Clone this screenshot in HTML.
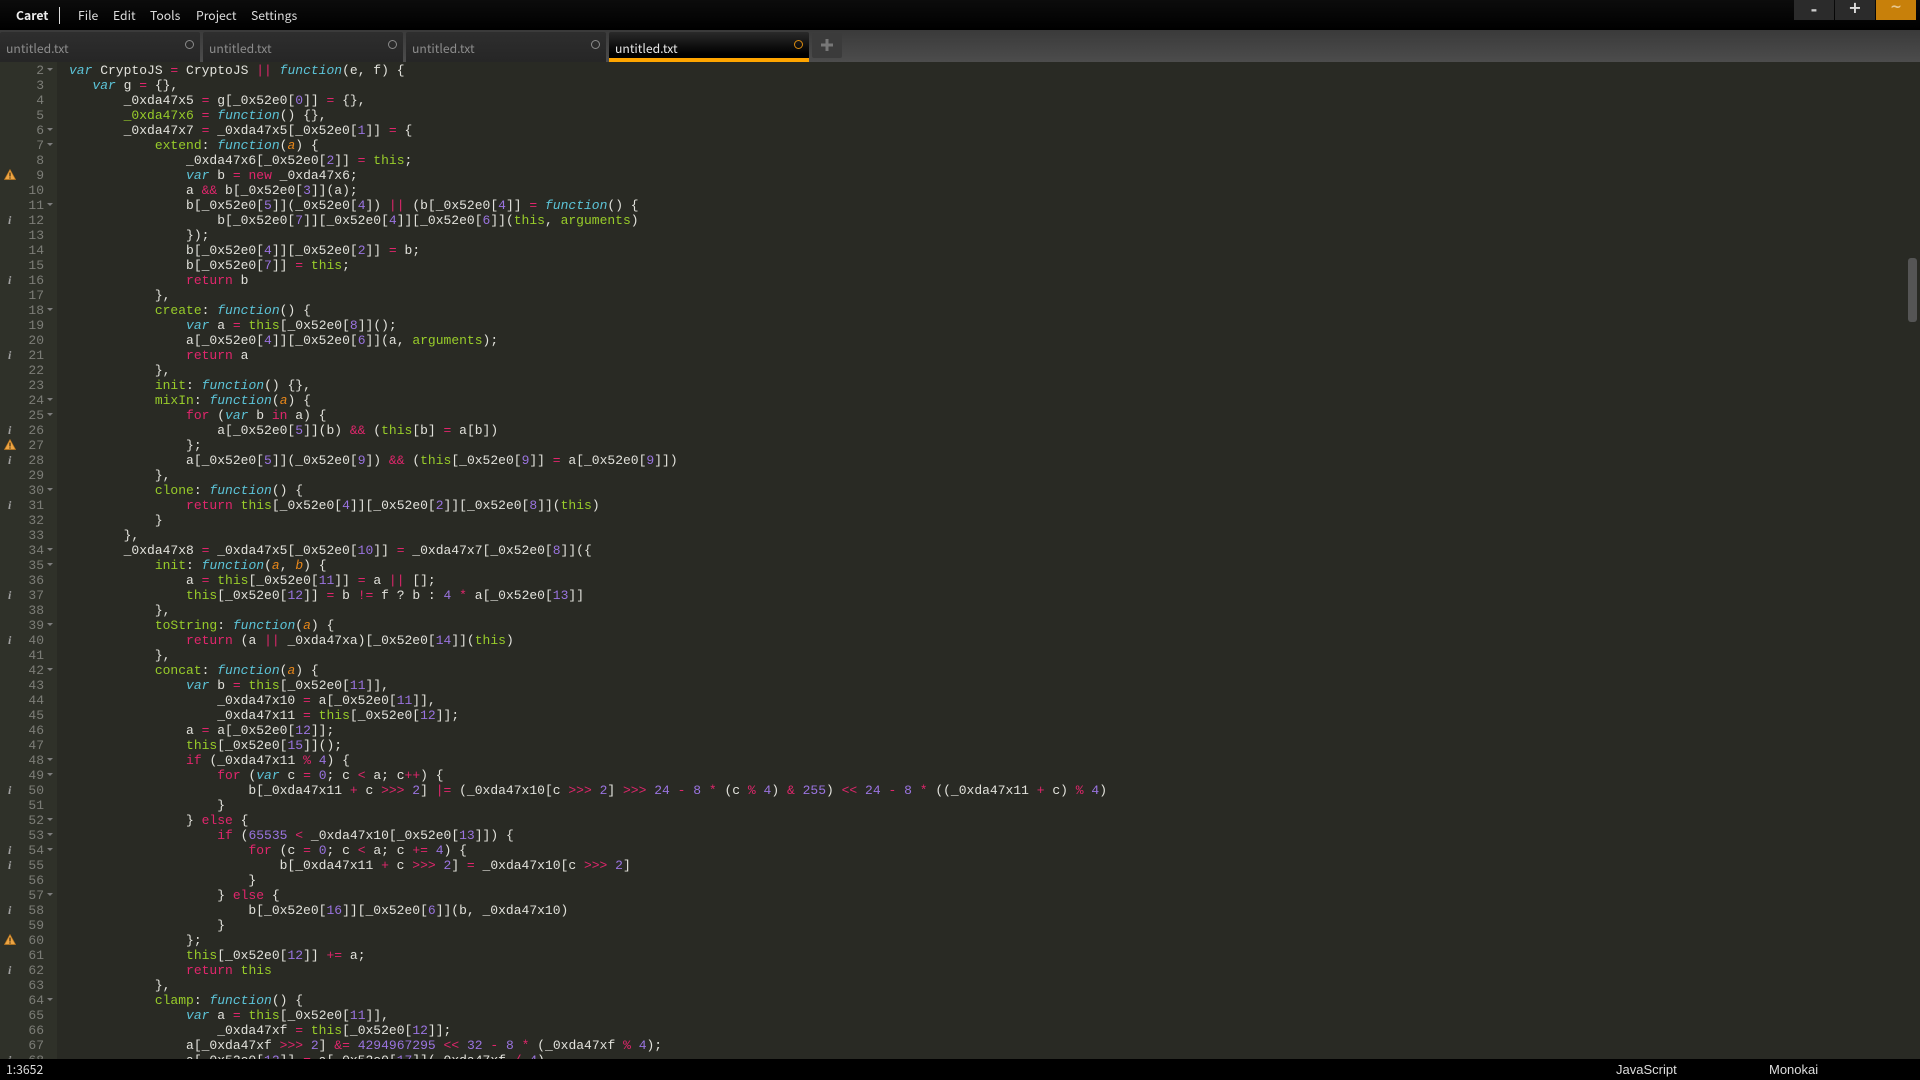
<!DOCTYPE html>
<html><head><meta charset="utf-8"><title>Caret</title>
<style>
*{box-sizing:border-box}
html,body{margin:0;padding:0;width:1920px;height:1080px;overflow:hidden;background:#292a24}
.a{position:absolute}
#top{left:0;top:0;width:1920px;height:30px;background:linear-gradient(#0c0c0c,#000);font-family:"Noto Sans CJK SC","Liberation Sans",sans-serif;font-size:12.2px;color:#ddd}
#top span{position:absolute;top:4px;line-height:22px;white-space:pre}
#bar{left:0;top:30px;width:1920px;height:32px;background:linear-gradient(#3a3a3a,#4c4c4c)}
.tab{top:32px;width:200px;height:30px;background:linear-gradient(#2e2e2e,#262626);border-radius:2px 2px 0 0;font-family:"Noto Sans CJK SC","Liberation Sans",sans-serif;font-size:12.2px;color:#8c8c8c}
.tab span{position:absolute;left:6px;top:6px;line-height:20px}
.tab div{position:absolute;left:185px;top:8px;width:9px;height:9px;border:1px solid #8a8a8a;border-radius:50%}
.on{background:linear-gradient(#2a2a2a,#000 85%);color:#e8e8e8;border-bottom:4px solid #ffa500}
.on div{border-color:#d98a10}
#add{left:812px;top:33px;width:30px;height:25px;background:#3b3b3b;border-radius:2px}
.wb{top:0;width:40px;height:20px;background:#2b2b2b}
#gut{left:0;top:62px;width:57px;height:997px;padding-top:1px;background:#2f3129;overflow:hidden;font:13px/15px "Liberation Mono",monospace;color:#7d7e78}
#gut div{position:relative;height:15px;width:44px;text-align:right}
.f::after{content:"";position:absolute;left:47px;top:5px;border-left:3px solid transparent;border-right:3px solid transparent;border-top:3.5px solid #7c7c7c}
#gut em{position:absolute;left:8px;top:0;font:italic bold 12px/15px "Liberation Serif",serif;color:#a0a0a0}
#gut svg{position:absolute;left:4px;top:1px}
#code{left:69px;top:62px;width:1840px;height:997px;padding-top:1px;overflow:hidden;font:13px/15px "Liberation Mono",monospace;color:#e2e2dc}
#code div{height:15px;white-space:pre}
b{font-weight:normal;color:#e0266c}
i{color:#5cc4d8;font-style:italic}
u{text-decoration:none;color:#9a74e0}
s{text-decoration:none;color:#98cc2a}
em{color:#e8871a;font-style:italic}
#sb{left:1908px;top:258px;width:9px;height:64px;background:#555;border-radius:3px}
#st{left:0;top:1059px;width:1920px;height:21px;background:#000;color:#ddd;font:13px/21px "Liberation Sans",sans-serif}
#st span{position:absolute;top:0}
</style></head><body>
<div class="a" id="top">
<span style="left:16px;font-weight:bold;color:#eee">Caret</span>
<div class="a" style="left:59px;top:7px;width:1px;height:17px;background:#ddd"></div>
<span style="left:78px">File</span><span style="left:113px">Edit</span><span style="left:150px">Tools</span><span style="left:196px">Project</span><span style="left:251px">Settings</span>
</div>
<div class="a wb" style="left:1794px"></div><div class="a wb" style="left:1835px"></div><div class="a wb" style="left:1876px;background:#c8800a"></div>
<div class="a" style="left:1794px;top:0;width:40px;height:20px;text-align:center;font:bold 16px/20px 'DejaVu Sans',sans-serif;color:#ccc">-</div>
<div class="a" style="left:1835px;top:0;width:40px;height:20px;text-align:center;font:bold 16px/16px 'DejaVu Sans',sans-serif;color:#ddd">+</div>
<div class="a" style="left:1876px;top:0;width:40px;height:20px;text-align:center;font:bold 14px/15px 'DejaVu Sans',sans-serif;color:#e8c890">~</div>
<div class="a" id="bar"></div>
<div class="a tab" style="left:0"><span>untitled.txt</span><div></div></div>
<div class="a tab" style="left:203px"><span>untitled.txt</span><div></div></div>
<div class="a tab" style="left:406px"><span>untitled.txt</span><div></div></div>
<div class="a tab on" style="left:609px"><span>untitled.txt</span><div></div></div>
<div class="a" id="add"><svg width="30" height="25" style="display:block"><path d="M15 6v12M9 12h12" stroke="#777" stroke-width="3" fill="none"/></svg></div>
<div class="a" id="gut">
<div class="f">2</div><div>3</div><div>4</div><div>5</div><div class="f">6</div><div class="f">7</div><div>8</div>
<div><svg width="12" height="11" viewBox="0 0 12 11"><path d="M6 .5L11.5 10.5H.5Z" fill="#eda544" stroke="#b8741c" stroke-width=".7"/><path d="M6 3.5v4M6 8.4v1.2" stroke="#3a2a10" stroke-width="1.2"/></svg>9</div>
<div>10</div><div class="f">11</div><div><em>i</em>12</div><div>13</div><div>14</div><div>15</div><div><em>i</em>16</div><div>17</div><div class="f">18</div><div>19</div><div>20</div><div><em>i</em>21</div><div>22</div><div>23</div><div class="f">24</div><div class="f">25</div><div><em>i</em>26</div>
<div><svg width="12" height="11" viewBox="0 0 12 11"><path d="M6 .5L11.5 10.5H.5Z" fill="#eda544" stroke="#b8741c" stroke-width=".7"/><path d="M6 3.5v4M6 8.4v1.2" stroke="#3a2a10" stroke-width="1.2"/></svg>27</div>
<div><em>i</em>28</div><div>29</div><div class="f">30</div><div><em>i</em>31</div><div>32</div><div>33</div><div class="f">34</div><div class="f">35</div><div>36</div><div><em>i</em>37</div><div>38</div><div class="f">39</div><div><em>i</em>40</div><div>41</div><div class="f">42</div><div>43</div><div>44</div><div>45</div><div>46</div><div>47</div><div class="f">48</div><div class="f">49</div><div><em>i</em>50</div><div>51</div><div class="f">52</div><div class="f">53</div><div class="f"><em>i</em>54</div><div><em>i</em>55</div><div>56</div><div class="f">57</div><div><em>i</em>58</div><div>59</div>
<div><svg width="12" height="11" viewBox="0 0 12 11"><path d="M6 .5L11.5 10.5H.5Z" fill="#eda544" stroke="#b8741c" stroke-width=".7"/><path d="M6 3.5v4M6 8.4v1.2" stroke="#3a2a10" stroke-width="1.2"/></svg>60</div>
<div>61</div><div><em>i</em>62</div><div>63</div><div class="f">64</div><div>65</div><div>66</div><div>67</div><div><em>i</em>68</div>
</div>
<div class="a" id="code"><div><i>var</i> CryptoJS <b>=</b> CryptoJS <b>||</b> <i>function</i>(e, f) {</div><div>   <i>var</i> g <b>=</b> {},</div><div>       _0xda47x5 <b>=</b> g[_0x52e0[<u>0</u>]] <b>=</b> {},</div><div>       <s>_0xda47x6</s> <b>=</b> <i>function</i>() {},</div><div>       _0xda47x7 <b>=</b> _0xda47x5[_0x52e0[<u>1</u>]] <b>=</b> {</div><div>           <s>extend</s>: <i>function</i>(<em>a</em>) {</div><div>               _0xda47x6[_0x52e0[<u>2</u>]] <b>=</b> <s>this</s>;</div><div>               <i>var</i> b <b>=</b> <b>new</b> _0xda47x6;</div><div>               a <b>&amp;&amp;</b> b[_0x52e0[<u>3</u>]](a);</div><div>               b[_0x52e0[<u>5</u>]](_0x52e0[<u>4</u>]) <b>||</b> (b[_0x52e0[<u>4</u>]] <b>=</b> <i>function</i>() {</div><div>                   b[_0x52e0[<u>7</u>]][_0x52e0[<u>4</u>]][_0x52e0[<u>6</u>]](<s>this</s>, <s>arguments</s>)</div><div>               });</div><div>               b[_0x52e0[<u>4</u>]][_0x52e0[<u>2</u>]] <b>=</b> b;</div><div>               b[_0x52e0[<u>7</u>]] <b>=</b> <s>this</s>;</div><div>               <b>return</b> b</div><div>           },</div><div>           <s>create</s>: <i>function</i>() {</div><div>               <i>var</i> a <b>=</b> <s>this</s>[_0x52e0[<u>8</u>]]();</div><div>               a[_0x52e0[<u>4</u>]][_0x52e0[<u>6</u>]](a, <s>arguments</s>);</div><div>               <b>return</b> a</div><div>           },</div><div>           <s>init</s>: <i>function</i>() {},</div><div>           <s>mixIn</s>: <i>function</i>(<em>a</em>) {</div><div>               <b>for</b> (<i>var</i> b <b>in</b> a) {</div><div>                   a[_0x52e0[<u>5</u>]](b) <b>&amp;&amp;</b> (<s>this</s>[b] <b>=</b> a[b])</div><div>               };</div><div>               a[_0x52e0[<u>5</u>]](_0x52e0[<u>9</u>]) <b>&amp;&amp;</b> (<s>this</s>[_0x52e0[<u>9</u>]] <b>=</b> a[_0x52e0[<u>9</u>]])</div><div>           },</div><div>           <s>clone</s>: <i>function</i>() {</div><div>               <b>return</b> <s>this</s>[_0x52e0[<u>4</u>]][_0x52e0[<u>2</u>]][_0x52e0[<u>8</u>]](<s>this</s>)</div><div>           }</div><div>       },</div><div>       _0xda47x8 <b>=</b> _0xda47x5[_0x52e0[<u>10</u>]] <b>=</b> _0xda47x7[_0x52e0[<u>8</u>]]({</div><div>           <s>init</s>: <i>function</i>(<em>a</em>, <em>b</em>) {</div><div>               a <b>=</b> <s>this</s>[_0x52e0[<u>11</u>]] <b>=</b> a <b>||</b> [];</div><div>               <s>this</s>[_0x52e0[<u>12</u>]] <b>=</b> b <b>!=</b> f ? b : <u>4</u> <b>*</b> a[_0x52e0[<u>13</u>]]</div><div>           },</div><div>           <s>toString</s>: <i>function</i>(<em>a</em>) {</div><div>               <b>return</b> (a <b>||</b> _0xda47xa)[_0x52e0[<u>14</u>]](<s>this</s>)</div><div>           },</div><div>           <s>concat</s>: <i>function</i>(<em>a</em>) {</div><div>               <i>var</i> b <b>=</b> <s>this</s>[_0x52e0[<u>11</u>]],</div><div>                   _0xda47x10 <b>=</b> a[_0x52e0[<u>11</u>]],</div><div>                   _0xda47x11 <b>=</b> <s>this</s>[_0x52e0[<u>12</u>]];</div><div>               a <b>=</b> a[_0x52e0[<u>12</u>]];</div><div>               <s>this</s>[_0x52e0[<u>15</u>]]();</div><div>               <b>if</b> (_0xda47x11 <b>%</b> <u>4</u>) {</div><div>                   <b>for</b> (<i>var</i> c <b>=</b> <u>0</u>; c <b>&lt;</b> a; c<b>++</b>) {</div><div>                       b[_0xda47x11 <b>+</b> c <b>&gt;&gt;&gt;</b> <u>2</u>] <b>|=</b> (_0xda47x10[c <b>&gt;&gt;&gt;</b> <u>2</u>] <b>&gt;&gt;&gt;</b> <u>24</u> <b>-</b> <u>8</u> <b>*</b> (c <b>%</b> <u>4</u>) <b>&amp;</b> <u>255</u>) <b>&lt;&lt;</b> <u>24</u> <b>-</b> <u>8</u> <b>*</b> ((_0xda47x11 <b>+</b> c) <b>%</b> <u>4</u>)</div><div>                   }</div><div>               } <b>else</b> {</div><div>                   <b>if</b> (<u>65535</u> <b>&lt;</b> _0xda47x10[_0x52e0[<u>13</u>]]) {</div><div>                       <b>for</b> (c <b>=</b> <u>0</u>; c <b>&lt;</b> a; c <b>+=</b> <u>4</u>) {</div><div>                           b[_0xda47x11 <b>+</b> c <b>&gt;&gt;&gt;</b> <u>2</u>] <b>=</b> _0xda47x10[c <b>&gt;&gt;&gt;</b> <u>2</u>]</div><div>                       }</div><div>                   } <b>else</b> {</div><div>                       b[_0x52e0[<u>16</u>]][_0x52e0[<u>6</u>]](b, _0xda47x10)</div><div>                   }</div><div>               };</div><div>               <s>this</s>[_0x52e0[<u>12</u>]] <b>+=</b> a;</div><div>               <b>return</b> <s>this</s></div><div>           },</div><div>           <s>clamp</s>: <i>function</i>() {</div><div>               <i>var</i> a <b>=</b> <s>this</s>[_0x52e0[<u>11</u>]],</div><div>                   _0xda47xf <b>=</b> <s>this</s>[_0x52e0[<u>12</u>]];</div><div>               a[_0xda47xf <b>&gt;&gt;&gt;</b> <u>2</u>] <b>&amp;=</b> <u>4294967295</u> <b>&lt;&lt;</b> <u>32</u> <b>-</b> <u>8</u> <b>*</b> (_0xda47xf <b>%</b> <u>4</u>);</div><div>               a[_0x52e0[<u>12</u>]] <b>=</b> a[_0x52e0[<u>17</u>]](_0xda47xf <b>/</b> <u>4</u>)</div></div>
<div class="a" id="sb"></div>
<div class="a" id="st"><span style="left:6px;font-family:'Noto Sans CJK SC','Liberation Sans',sans-serif;font-size:12.2px">1:3652</span><span style="left:1616px">JavaScript</span><span style="left:1769px">Monokai</span></div>
</body></html>
